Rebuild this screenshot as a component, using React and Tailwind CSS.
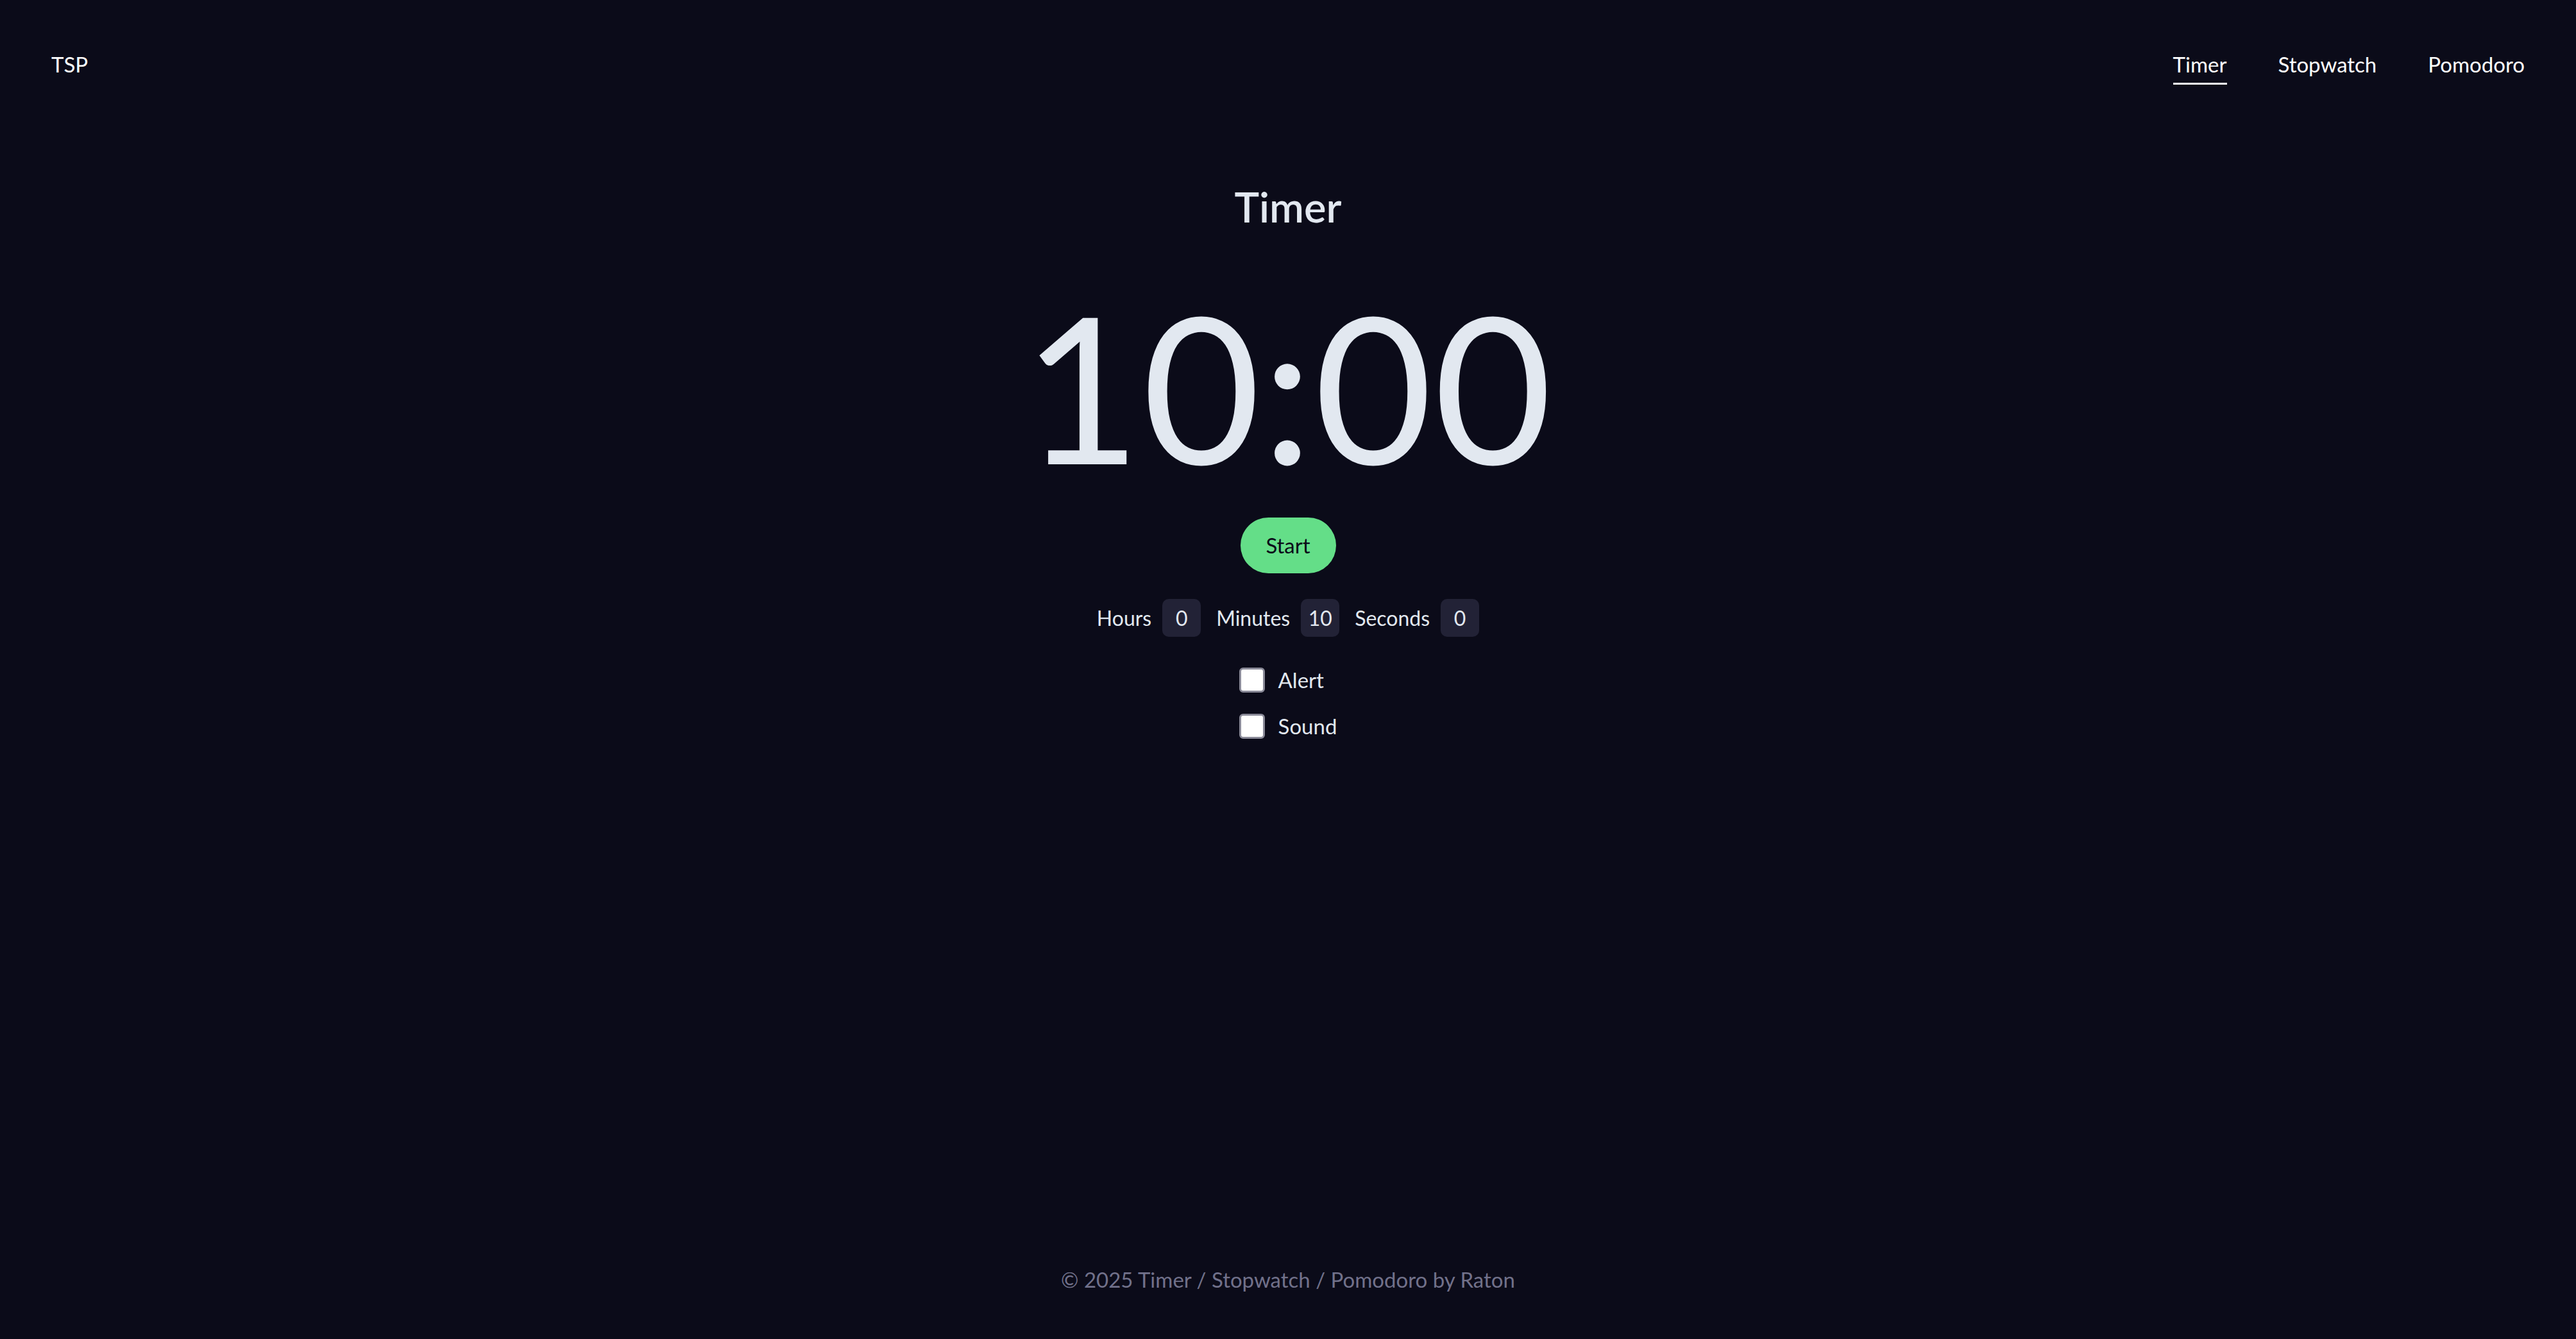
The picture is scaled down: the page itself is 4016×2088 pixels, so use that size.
import { useState } from 'react';

const pad = (n) => String(n).padStart(2, '0');

function NavLink({ label, active }) {
  return (
    <a
      href="#"
      className={
        active
          ? 'pb-[4px] border-b-[3px] border-white text-white'
          : 'pb-[4px] border-b-[3px] border-transparent text-white'
      }
    >
      {label}
    </a>
  );
}

function TimeField({ label, value, onChange }) {
  return (
    <label className="flex items-center gap-[17px]">
      <span>{label}</span>
      <input
        type="text"
        value={value}
        onChange={(e) => onChange(e.target.value.replace(/\D/g, ''))}
        className="w-[60px] h-[59px] rounded-[10px] bg-[#222236] text-center text-[#e2e8f0] outline-none"
      />
    </label>
  );
}

function Check({ label, checked, onChange }) {
  return (
    <label className="flex items-center gap-[21px]">
      <input
        type="checkbox"
        checked={checked}
        onChange={(e) => onChange(e.target.checked)}
        className="appearance-none w-[40px] h-[39px] bg-white border-[3px] border-[#8a8a98] rounded-[6px]"
      />
      <span>{label}</span>
    </label>
  );
}

export default function App() {
  const [hours, setHours] = useState('0');
  const [minutes, setMinutes] = useState('10');
  const [seconds, setSeconds] = useState('0');
  const [alert, setAlert] = useState(false);
  const [sound, setSound] = useState(false);

  const total = (+hours || 0) * 3600 + (+minutes || 0) * 60 + (+seconds || 0);
  const h = Math.floor(total / 3600);
  const display = h > 0
    ? `${h}:${pad(Math.floor((total % 3600) / 60))}:${pad(total % 60)}`
    : `${Math.floor(total / 60)}:${pad(total % 60)}`;

  return (
    <div className="min-h-screen flex flex-col bg-[#0b0b19] text-[#e2e8f0] text-[33px] font-['Lato',sans-serif]">
      <header className="flex items-start justify-between px-[80px] pt-[75px] leading-[50px]">
        <a href="#" className="text-white">TSP</a>
        <nav className="flex gap-[80px]">
          <NavLink label="Timer" active />
          <NavLink label="Stopwatch" />
          <NavLink label="Pomodoro" />
        </nav>
      </header>

      <main className="flex-1 flex flex-col items-center">
        <h1 className="mt-[158px] text-[65px] leading-none font-semibold">Timer</h1>

        <div className="mt-[87px] text-[318px] leading-none tracking-[2px]">{display}</div>

        <button className="mt-[47px] w-[149px] h-[87px] rounded-full bg-[#64de88] text-[#0b0b19]">
          Start
        </button>

        <div className="mt-[40px] flex items-center gap-[24px] text-[32px]">
          <TimeField label="Hours" value={hours} onChange={setHours} />
          <TimeField label="Minutes" value={minutes} onChange={setMinutes} />
          <TimeField label="Seconds" value={seconds} onChange={setSeconds} />
        </div>

        <div className="mt-[42px] flex flex-col items-start gap-[22px] leading-[50px]">
          <Check label="Alert" checked={alert} onChange={setAlert} />
          <Check label="Sound" checked={sound} onChange={setSound} />
        </div>
      </main>

      <footer className="pb-[68px] text-center leading-[50px] text-[#71718a]">
        © 2025 Timer / Stopwatch / Pomodoro by Raton
      </footer>
    </div>
  );
}
